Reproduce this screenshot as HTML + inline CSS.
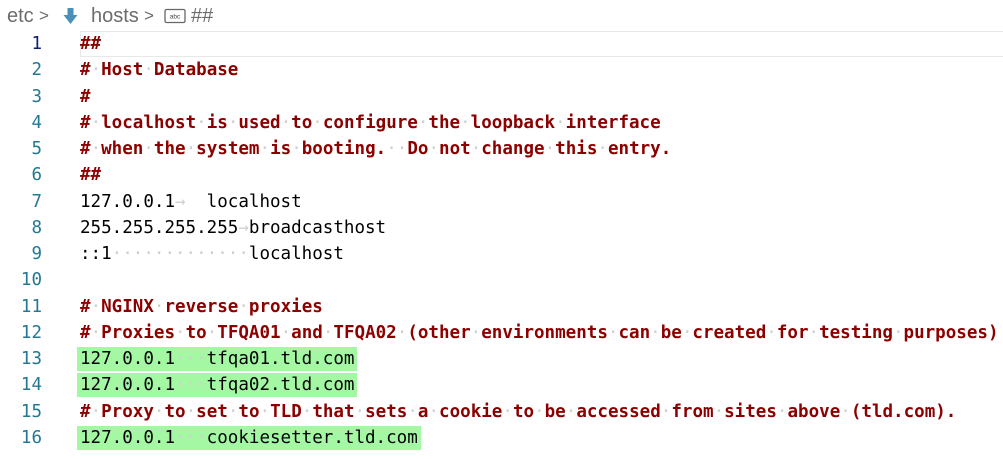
<!DOCTYPE html>
<html><head><meta charset="utf-8"><style>
body{margin:0;width:1003px;height:459px;background:#fff;overflow:hidden;position:relative;font-family:"DejaVu Sans Mono","Liberation Mono",monospace;}
.bc{position:absolute;top:3px;font:20px "Liberation Sans",sans-serif;color:#6c6c6c;white-space:nowrap;height:26px;line-height:26px}
.bc span,.bc svg{position:absolute;top:0}
.cur{position:absolute;left:80px;top:31px;width:930px;height:24px;border:1px solid #e8e8e8;border-right:none}
.ln{position:absolute;left:0;width:42px;text-align:right;font-size:17.5px;color:#237893;line-height:26.27px}
.code{position:absolute;left:80px;top:31px;font-size:17.55px;line-height:26.27px;white-space:pre;color:#000}
.c{color:#8b0000;font-weight:bold}
i{font-style:normal;font-weight:normal;color:#d0d0d0}
.g{background:#a4f8a4;padding:2px 3px;margin-left:-3px}
</style></head><body>
<div class="bc" style="left:0;width:260px">
<span style="left:7px">etc</span>
<span style="left:39px;font-size:17px">&gt;</span>
<svg style="left:63px;top:4px" width="15" height="18" viewBox="0 0 15 18"><path d="M4.5 1h6v7h4l-7 9-7-9h4z" fill="#4a90b8"/></svg>
<span style="left:91px">hosts</span>
<span style="left:144px;font-size:17px">&gt;</span>
<svg style="left:164px;top:5px" width="22" height="16" viewBox="0 0 22 16"><rect x="1" y="1.5" width="20" height="13" rx="1.5" fill="none" stroke="#666" stroke-width="1.3"/><text x="11" y="10.5" font-size="6.5" text-anchor="middle" fill="#444" font-family="Liberation Sans">abc</text></svg>
<span style="left:191px">##</span>
</div>
<div class="cur"></div>
<div class="ln" style="top:31px">
<div style="color:#0b216f">1</div><div>2</div><div>3</div><div>4</div><div>5</div><div>6</div><div>7</div><div>8</div><div>9</div><div>10</div><div>11</div><div>12</div><div>13</div><div>14</div><div>15</div><div>16</div></div>
<div class="code"><span class="c">##</span>
<span class="c">#<i>·</i>Host<i>·</i>Database</span>
<span class="c">#</span>
<span class="c">#<i>·</i>localhost<i>·</i>is<i>·</i>used<i>·</i>to<i>·</i>configure<i>·</i>the<i>·</i>loopback<i>·</i>interface</span>
<span class="c">#<i>·</i>when<i>·</i>the<i>·</i>system<i>·</i>is<i>·</i>booting.<i>·</i><i>·</i>Do<i>·</i>not<i>·</i>change<i>·</i>this<i>·</i>entry.</span>
<span class="c">##</span>
127.0.0.1<i>→  </i>localhost
255.255.255.255<i>→</i>broadcasthost
::1<i>·············</i>localhost

<span class="c">#<i>·</i>NGINX<i>·</i>reverse<i>·</i>proxies</span>
<span class="c">#<i>·</i>Proxies<i>·</i>to<i>·</i>TFQA01<i>·</i>and<i>·</i>TFQA02<i>·</i>(other<i>·</i>environments<i>·</i>can<i>·</i>be<i>·</i>created<i>·</i>for<i>·</i>testing<i>·</i>purposes)</span>
<span class="g">127.0.0.1<i>···</i>tfqa01.tld.com</span>
<span class="g">127.0.0.1<i>···</i>tfqa02.tld.com</span>
<span class="c">#<i>·</i>Proxy<i>·</i>to<i>·</i>set<i>·</i>to<i>·</i>TLD<i>·</i>that<i>·</i>sets<i>·</i>a<i>·</i>cookie<i>·</i>to<i>·</i>be<i>·</i>accessed<i>·</i>from<i>·</i>sites<i>·</i>above<i>·</i>(tld.com).</span>
<span class="g">127.0.0.1<i>···</i>cookiesetter.tld.com</span></div>
</body></html>
